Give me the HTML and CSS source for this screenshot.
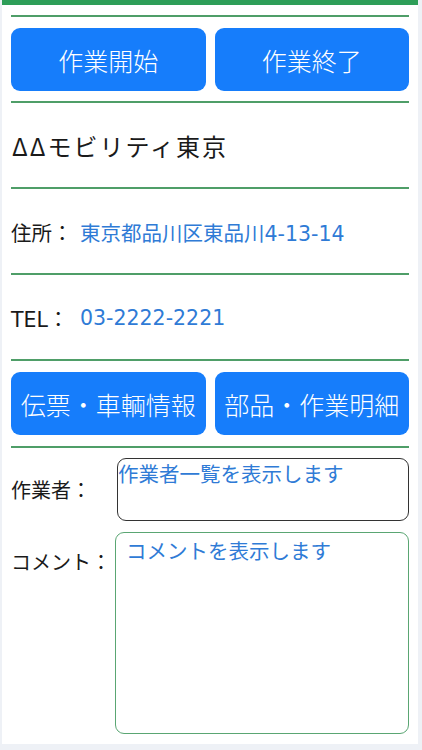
FILE: index.html
```html
<!DOCTYPE html>
<html lang="ja">
<head>
<meta charset="utf-8">
<link rel="stylesheet" href="styles.css">
</head>
<body>
<div class="panel">
  <div class="topbar"></div>
  <div class="content">
    <div class="rule first"></div>
    <div class="btn-row top">
      <button class="btn">作業開始</button>
      <button class="btn">作業終了</button>
    </div>
    <div class="rule"></div>
    <div class="row title">ΔΔモビリティ東京</div>
    <div class="rule tight"></div>
    <div class="row info"><span class="label">住所：</span><span class="value">東京都品川区東品川4-13-14</span></div>
    <div class="rule tight"></div>
    <div class="row info"><span class="label">TEL：</span><span class="value">03-2222-2221</span></div>
    <div class="rule tight"></div>
    <div class="btn-row mid">
      <button class="btn">伝票・車輌情報</button>
      <button class="btn">部品・作業明細</button>
    </div>
    <div class="rule"></div>
    <div class="field worker">
      <div class="flabel">作業者：</div>
      <div class="box worker-box">作業者一覧を表示します</div>
    </div>
    <div class="field comment">
      <div class="flabel">コメント：</div>
      <div class="box comment-box">コメントを表示します</div>
    </div>
  </div>
</div>
</body>
</html>
```

FILE: styles.css
```css
* { box-sizing: border-box; }
html, body {
  margin: 0;
  padding: 0;
  background: #eef1f6;
  font-family: "DejaVu Sans", "Noto Sans CJK JP", sans-serif;
  color: #1a1a1a;
}
.panel {
  margin: 0 4px 0 2px;
  background: #ffffff;
  height: 744px;
}
.topbar {
  height: 5px;
  background: #2e9e58;
}
.content {
  padding: 0 9px;
}
.rule {
  height: 2px;
  background: #4f9e68;
}
.rule.first { margin-top: 10px; }
.btn-row {
  display: flex;
  gap: 9px;
}
.btn-row.top { margin: 11px 0 10px; }
.btn-row.mid { margin: 11px 0 11px; }
.btn {
  flex: 1;
  height: 63px;
  border: none;
  border-radius: 9px;
  background: #167dfb;
  color: #ffffff;
  font-family: "Noto Sans CJK JP", sans-serif;
  font-size: 25px;
  font-weight: 300;
  padding: 0;
  letter-spacing: 0;
}
.row {
  height: 84px;
  display: flex;
  align-items: center;
}
.title {
  font-family: "Noto Sans CJK JP", sans-serif;
  font-size: 24px;
  letter-spacing: 2px;
  padding-top: 0;
  padding-left: 1px;
}
.info {
  font-size: 20.5px;
  padding-top: 2px;
}
.label {
  width: 69px;
  flex: none;
  color: #1a1a1a;
}
.value {
  color: #2f7bd6;
}
.field {
  display: flex;
  align-items: flex-start;
}
.worker { margin-top: 10px; }
.comment { margin-top: 11px; }
.flabel {
  flex: none;
  font-size: 20px;
  line-height: 28px;
}
.worker .flabel { width: 106px; margin-top: 19px; }
.comment .flabel { width: 104px; margin-top: 17px; }
.box {
  flex: 1;
  border-radius: 9px;
  color: #2f7bd6;
  font-size: 20.5px;
  line-height: 28px;
}
.worker-box {
  height: 63px;
  border: 1.5px solid #333333;
  padding: 2px 0 0 0;
}
.comment-box {
  height: 202px;
  border: 1.5px solid #5aa673;
  padding: 5px 0 0 10px;
}
```
